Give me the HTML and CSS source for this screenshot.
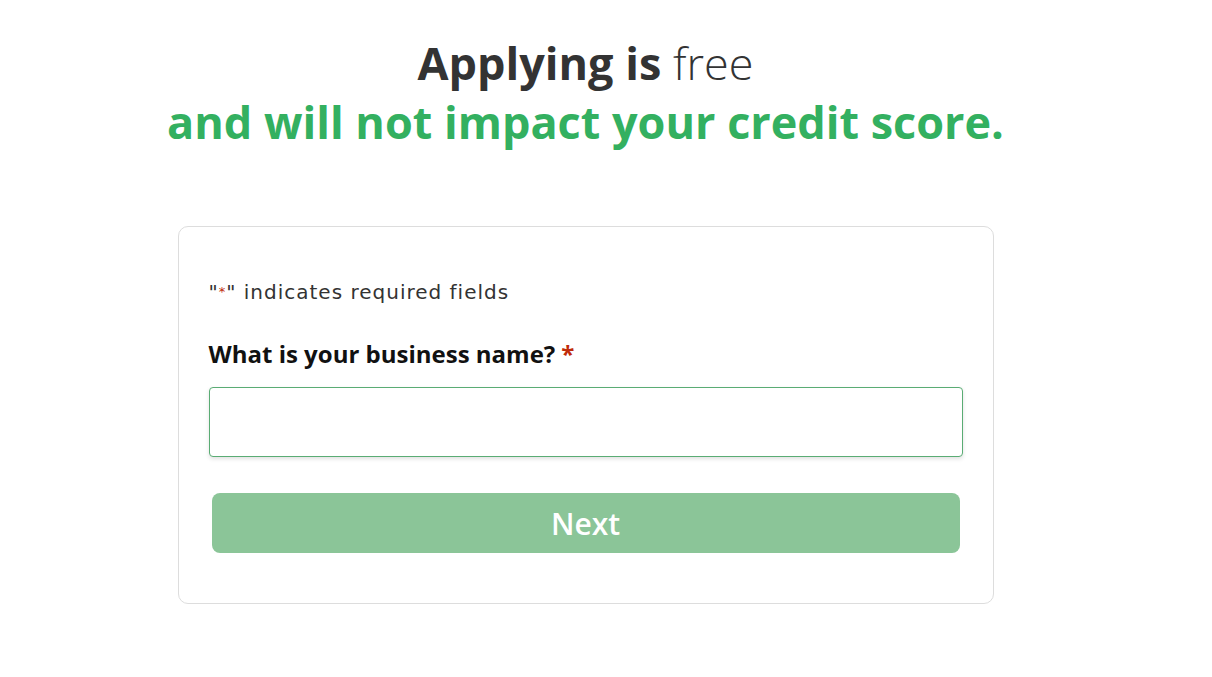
FILE: index.html
```html
<!DOCTYPE html>
<html lang="en">
<head>
  <meta charset="UTF-8" />
  <meta name="viewport" content="width=device-width, initial-scale=1.0" />
  <title>Apply</title>
  <link rel="stylesheet" href="styles.css">
</head>
<body>
  <div class="page">
    <h1 class="headline">
      <span class="line-one"><strong>Applying is</strong> free</span>
      <span class="line-two">and will not impact your credit score.</span>
    </h1>

    <form class="apply-card" onsubmit="return false">
      <p class="required-note">"<span class="req">*</span>" indicates required fields</p>
      <label class="field-label" for="business">What is your business name?<span class="req-mark">*</span></label>
      <input type="text" id="business" class="field-input" />
      <button type="submit" class="next-btn">Next</button>
    </form>
  </div>
</body>
</html>
```

FILE: styles.css
```css
body {
  margin: 0;
  background: #fff;
  font-family: 'Open Sans', Arial, sans-serif;
  color: #333;
}
.page {
  width: 1171px;
  display: flex;
  flex-direction: column;
  align-items: center;
  padding-top: 33px;
}
.headline {
  margin: 0;
  text-align: center;
  font-size: 45px;
  line-height: 59px;
  font-weight: 300;
}
.headline span {
  display: block;
}
.line-one {
  color: #333;
}
.line-one strong {
  font-weight: 700;
}
.line-two {
  color: #33b060;
  font-weight: 700;
}
.apply-card {
  margin-top: 75px;
  width: 754px;
  border: 1px solid #ddd;
  border-radius: 10px;
  padding: 53px 30px 50px;
  display: flex;
  flex-direction: column;
}
.required-note {
  margin: 0 0 33px;
  font-family: 'DejaVu Sans', sans-serif;
  font-size: 20px;
  font-weight: 400;
  color: #333;
  letter-spacing: 1px;
}
.req {
  color: #c02b0a;
  font-size: 13px;
  vertical-align: 3px;
}
.field-label {
  font-size: 24px;
  font-weight: 700;
  color: #111;
  margin-bottom: 17px;
}
.req-mark {
  color: #c02b0a;
  margin-left: 6px;
}
.field-input {
  height: 70px;
  box-sizing: border-box;
  border: 1px solid #5aac74;
  border-radius: 4px;
  box-shadow: 0 2px 4px rgba(0,0,0,0.12);
  outline: none;
  padding: 0 14px;
  font-size: 18px;
}
.next-btn {
  margin: 36px 3px 0;
  height: 60px;
  border: none;
  border-radius: 8px;
  background: #8bc598;
  color: #fff;
  font-family: 'Open Sans', Arial, sans-serif;
  font-size: 30px;
  font-weight: 600;
  cursor: pointer;
}
```
